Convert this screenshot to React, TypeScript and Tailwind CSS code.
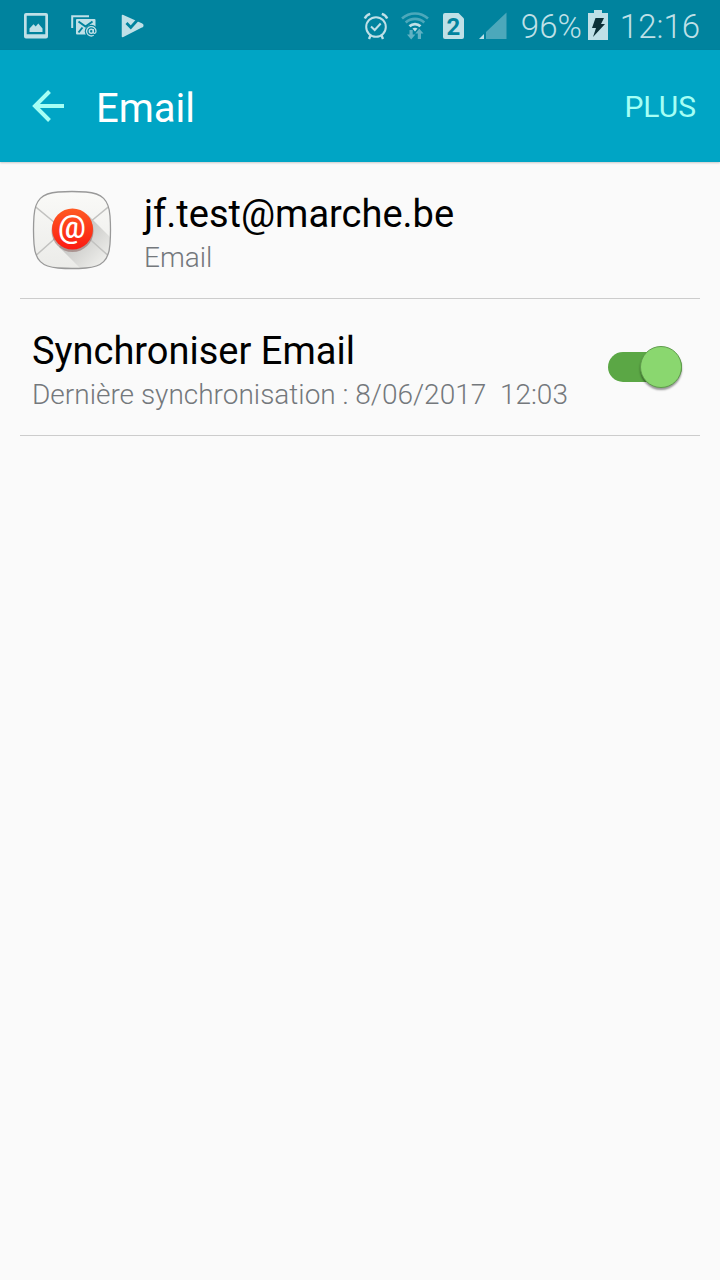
import { useState } from "react";

function StatusBar() {
  return (
    <div className="flex h-[50px] items-center justify-between bg-[#00839e] pr-5 pl-6 text-[#bfe0e7]">
      <div className="flex items-center gap-[22px]">
        {/* picture */}
        <svg width="24" height="32" viewBox="0 0 24 32" fill="currentColor">
          <path
            fillRule="evenodd"
            d="M2 4h20a2 2 0 0 1 2 2v21.500a2 2 0 0 1-2 2H2a2 2 0 0 1-2-2V6a2 2 0 0 1 2-2zM2.700 6.700v18.600h18.600V6.700z"
          />
          <path d="M5.500 23v-3.500l4-4.300 2.200 2.300 2.600-3 4.200 5V23z" />
        </svg>
        {/* mail */}
        <svg width="28" height="32" viewBox="0 0 28 32" fill="none">
          <path d="M2.200 19V7.200H19" stroke="currentColor" strokeWidth="2" />
          <rect x="6" y="10" width="19.500" height="15.500" rx="1" fill="currentColor" />
          <path
            d="M8.500 12.500l7 5 7-5M8.500 23.500l4-5"
            stroke="#00839e"
            strokeWidth="2"
          />
          <circle cx="21.300" cy="22.300" r="6.500" fill="#00839e" />
          <circle cx="21.300" cy="22.300" r="2" stroke="currentColor" strokeWidth="1.400" />
          <path
            d="M23.300 20v3c0 2 2.700 1.600 2.700-.7a4.700 4.700 0 1 0-2.300 4"
            stroke="currentColor"
            strokeWidth="1.300"
          />
        </svg>
        {/* store */}
        <svg width="24" height="32" viewBox="0 0 24 32">
          <path
            d="M2.500 6.500L22 15.300a1.300 1.300 0 0 1 0 2.400L2.500 27.500z"
            fill="currentColor"
            stroke="currentColor"
            strokeWidth="1.500"
            strokeLinejoin="round"
          />
          <path d="M6.500 14l4.300 4.500 8-9" fill="none" stroke="#00839e" strokeWidth="2.800" />
        </svg>
      </div>

      <div className="flex items-center">
        <div className="flex items-center gap-[11px]">
          {/* alarm */}
          <svg width="28" height="32" viewBox="0 0 28 32" fill="none" stroke="currentColor">
            <circle cx="14" cy="18" r="9.800" strokeWidth="2" />
            <path d="M2.800 9.500c1-2.400 2.800-3.900 5.400-4.700M25.200 9.500c-1-2.400-2.800-3.900-5.400-4.700" strokeWidth="2.400" />
            <path d="M9 17.500l3.700 3.500 6-6.500" strokeWidth="2" />
            <path d="M8.500 26.500l-1.500 3.500M19.500 26.500l1.500 3.500" strokeWidth="2.400" />
          </svg>
          {/* wifi */}
          <svg width="28" height="32" viewBox="0 0 28 32" fill="none" stroke="currentColor">
            <path
              d="M1 9.500c7.500-6.700 18.500-6.700 26 0M4.700 13.500c5.400-4.800 13.200-4.800 18.600 0"
              strokeWidth="2.600"
              opacity="0.400"
            />
            <path d="M8.500 17.300c3.200-3 7.800-3 11 0" strokeWidth="2.800" />
            <path d="M11.500 19.600c1.500-1.300 3.500-1.300 5 0L14 22.500z" fill="currentColor" stroke="none" />
            <path
              d="M8.500 21v4.500H6l4.200 5 4.200-5h-2.700V21zM16.800 30v-5.500h-2.500l4-4.700 4.200 4.700H20V30z"
              fill="currentColor"
              stroke="none"
              opacity="0.500"
            />
          </svg>
          {/* SIM 2 */}
          <svg width="28" height="32" viewBox="0 0 28 32">
            <path
              d="M5 4h13.500l5.500 5.500V28a2 2 0 0 1-2 2H5a2 2 0 0 1-2-2V6a2 2 0 0 1 2-2z"
              fill="currentColor"
            />
            <text
              x="13.500"
              y="26"
              textAnchor="middle"
              className="fill-[#00839e] font-[Roboto,sans-serif] text-[24px] font-bold"
            >
              2
            </text>
          </svg>
          {/* signal */}
          <svg width="28" height="32" viewBox="0 0 28 32" fill="currentColor">
            <path d="M0 30l5-5v5z" />
            <path d="M7 23L27.500 3.500V30H7z" opacity="0.400" />
          </svg>
        </div>
        <span className="ml-[14px] pt-[3px] text-[33px] leading-8 font-light">96%</span>
        {/* battery */}
        <svg className="ml-[6px]" width="20" height="32" viewBox="0 0 20 32">
          <path d="M0 4h6V1h8v3h6v27H0z" fill="currentColor" />
          <path d="M7.500 9h8.500l-3 6h4L5 28l3-9H4z" fill="#0c3038" />
        </svg>
        <span className="ml-3 pt-[3px] text-[33px] leading-8 font-light">12:16</span>
      </div>
    </div>
  );
}

function EmailLogo() {
  return (
    <svg width="80" height="80" viewBox="0 0 80 80" className="mb-1 shrink-0">
      <defs>
        <linearGradient id="paper" x1="0" y1="0" x2="0" y2="1">
          <stop offset="0" stopColor="#fafaf8" />
          <stop offset="1" stopColor="#ebebe8" />
        </linearGradient>
        <linearGradient id="seal" x1="0" y1="0" x2="0" y2="1">
          <stop offset="0" stopColor="#ff5a22" />
          <stop offset="1" stopColor="#fb1a12" />
        </linearGradient>
        <linearGradient id="shade" x1="0" y1="0" x2="1" y2="1">
          <stop offset="0.300" stopColor="#c4c4c2" />
          <stop offset="0.850" stopColor="#eeeeeb" />
        </linearGradient>
        <clipPath id="tile">
          <path d="M26 2Q40 1 54 2C70 3 77 10 78 26Q79 40 78 54C77 70 70 77 54 78Q40 79 26 78C10 77 3 70 2 54Q1 40 2 26C3 10 10 3 26 2z" />
        </clipPath>
      </defs>
      <g clipPath="url(#tile)">
        <rect width="80" height="80" fill="url(#paper)" />
        <path d="M56 25l24 24v31H50L27 57z" fill="url(#shade)" />
        <path d="M0 14l28 23M80 14L52 37M0 69l28-25M80 69L52 44" stroke="#c2c2c0" strokeWidth="1.500" />
      </g>
      <path
        d="M26 2Q40 1 54 2C70 3 77 10 78 26Q79 40 78 54C77 70 70 77 54 78Q40 79 26 78C10 77 3 70 2 54Q1 40 2 26C3 10 10 3 26 2z"
        fill="none"
        stroke="#999"
        strokeWidth="1.300"
      />
      <circle cx="40.500" cy="41" r="21" fill="#7d4a44" opacity="0.450" />
      <circle cx="40.500" cy="39" r="20.500" fill="url(#seal)" />
      <text
        x="40"
        y="48"
        textAnchor="middle"
        className="fill-white font-[Roboto,sans-serif] text-[31px] font-medium"
      >
        @
      </text>
    </svg>
  );
}

export default function App() {
  const [sync, setSync] = useState(true);

  return (
    <div className="min-h-screen bg-[#fafafa] font-[Roboto,sans-serif] text-black">
      <StatusBar />

      <header className="flex h-28 items-center bg-[#00a5c5] pr-6 pl-8 shadow-[0_1px_2px_rgba(0,0,0,0.2)]">
        <button type="button" aria-label="Retour" className="text-[#a5fff5]">
          <svg width="32" height="32" viewBox="0 0 32 32" fill="none" stroke="currentColor" strokeWidth="4">
            <path d="M32 16H3M17.500 1.500L3 16l14.500 14.500" />
          </svg>
        </button>
        <h1 className="ml-8 pt-[6px] text-[40px] leading-12 text-white">Email</h1>
        <button type="button" className="ml-auto pt-[2px] text-[30px] leading-9 text-[#a5fff5]">
          PLUS
        </button>
      </header>

      <main className="px-5">
        <section className="flex items-center border-b border-[#cccccc] px-3 pt-6 pb-5">
          <EmailLogo />
          <div className="ml-8 pt-1">
            <p className="text-[38px] leading-12">jf.test@marche.be</p>
            <p className="text-[28px] leading-10 font-light text-[#74787c]">Email</p>
          </div>
        </section>

        <label className="flex cursor-pointer items-center justify-between border-b border-[#cccccc] px-3 pt-6 pb-5">
          <span className="pt-1">
            <span className="block text-[38px] leading-12">Synchroniser Email</span>
            <span className="block text-[28px] leading-10 font-light whitespace-pre text-[#74787c]">
              Dernière synchronisation : 8/06/2017{"  "}12:03
            </span>
          </span>
          <span className="relative mr-[6px] mb-1 flex h-11 w-[74px] shrink-0 items-center">
            <input
              type="checkbox"
              role="switch"
              checked={sync}
              onChange={() => setSync(!sync)}
              className="peer h-[30px] w-full cursor-pointer appearance-none rounded-full bg-[#b5b5b5] checked:bg-[#5ba745]"
            />
            <span className="pointer-events-none absolute left-0 size-[42px] rounded-full border border-[#5f9c4c] bg-[#f1f1f1] shadow-[0_2px_2px_rgba(0,0,0,0.4)] peer-checked:right-0 peer-checked:left-auto peer-checked:bg-[#8ad76f]" />
          </span>
        </label>
      </main>
    </div>
  );
}
